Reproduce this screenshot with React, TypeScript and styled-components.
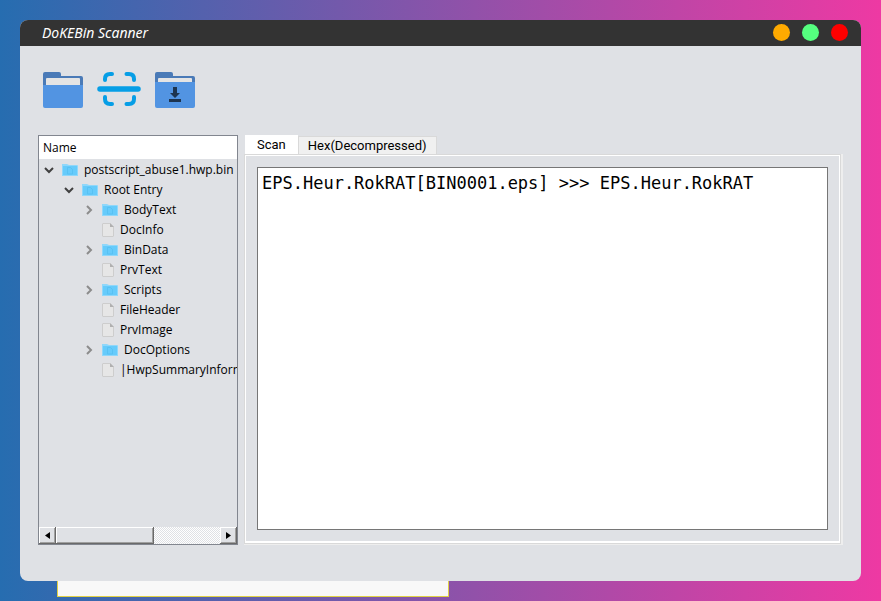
import React, { useState } from "react";
import styled, { createGlobalStyle } from "styled-components";

const GlobalStyle = createGlobalStyle`
  *, *::before, *::after { box-sizing: border-box; }
  body { margin: 0; }
  button { font: inherit; color: inherit; padding: 0; border: 0; background: none; cursor: pointer; }
`;

const Desktop = styled.div`
  min-height: 100vh;
  display: flex;
  flex-direction: column;
  padding: 20px 20px 4px;
  background: linear-gradient(to right, #266db0 0%, #ee39a3 100%);
  font-family: "Open Sans", "Noto Sans", sans-serif;
  color: #000;
`;

const Window = styled.main`
  flex: 1;
  display: flex;
  flex-direction: column;
  border-radius: 8px;
  overflow: hidden;
  background: #dfe1e5;
`;

const TitleBar = styled.header`
  height: 26px;
  display: flex;
  align-items: center;
  justify-content: space-between;
  padding: 0 13px 1px 22px;
  background: #333;
`;

const Title = styled.h1`
  margin: 0;
  color: #fff;
  font-family: "Noto Sans", sans-serif;
  font-size: 14px;
  line-height: 20px;
  font-weight: 400;
  font-style: italic;
`;

const WindowControls = styled.div`
  display: flex;
  gap: 12px;
`;

const ControlDot = styled.button<{ $color: string }>`
  width: 17px;
  height: 17px;
  border-radius: 50%;
  background: ${(p) => p.$color};
`;

const Toolbar = styled.div`
  display: flex;
  gap: 12px;
  padding: 22px 21px 0;
  height: 89px;
`;

const ToolButton = styled.button`
  width: 44px;
  height: 44px;
  display: flex;
  justify-content: center;
  align-items: center;
`;

const Panels = styled.div`
  flex: 1;
  display: grid;
  grid-template-columns: 200px minmax(0, 1fr);
  gap: 6px;
  padding: 0 18px 36px;
`;

const TreePanel = styled.section`
  display: flex;
  flex-direction: column;
  min-width: 0;
  border: 1px solid #82868f;
  overflow: hidden;
`;

const TreeHeader = styled.div`
  height: 23px;
  padding-left: 4px;
  background: #fff;
  font-size: 12px;
  line-height: 23px;
`;

const TreeList = styled.ul`
  flex: 1;
  margin: 0;
  padding: 1px 0 0;
  list-style: none;
`;

const TreeRow = styled.li<{ $depth: number }>`
  display: flex;
  align-items: center;
  height: 20px;
  padding-left: ${(p) => 3 + p.$depth * 20}px;
  font-size: 12px;
  line-height: 20px;
  white-space: nowrap;
`;

const Expander = styled.button`
  flex: none;
  display: flex;
  justify-content: center;
  width: 14px;
  margin-right: 6px;
`;

const ExpanderGap = styled.span`
  flex: none;
  width: 20px;
`;

const FolderSlot = styled.span`
  flex: none;
  display: flex;
  width: 22px;
`;

const FileSlot = styled.span`
  flex: none;
  display: flex;
  width: 18px;
`;

const ScrollBar = styled.div`
  display: flex;
  height: 17px;
  background: repeating-conic-gradient(#fff 0 25%, #dfe1e5 0 50%) 0 0 / 2px 2px;
`;

const ScrollPart = styled.button<{ $width: number }>`
  width: ${(p) => p.$width}px;
  display: flex;
  align-items: center;
  justify-content: center;
  background: #dfe1e5;
  border-right: 1px solid #696969;
  border-bottom: 1px solid #696969;
  box-shadow: inset 1px 1px #fff, inset -1px -1px #a0a0a0;
`;

const TrackSpace = styled.span`
  flex: 1;
`;

const ResultPanel = styled.section`
  display: flex;
  flex-direction: column;
  min-width: 0;
`;

const TabList = styled.div`
  display: flex;
  align-items: flex-end;
  height: 19px;
  padding-left: 1px;
`;

const Tab = styled.button<{ $active: boolean }>`
  height: ${(p) => (p.$active ? 21 : 18)}px;
  margin-bottom: ${(p) => (p.$active ? -2 : 0)}px;
  padding: 0 ${(p) => (p.$active ? 11 : 9)}px ${(p) => (p.$active ? 2 : 0)}px;
  background: ${(p) => (p.$active ? "#fff" : "#f0f0f0")};
  border: 1px solid ${(p) => (p.$active ? "#fff" : "#d9d9d9")};
  border-bottom: 0;
  font-family: Roboto, sans-serif;
  font-size: 13px;
  line-height: 16px;
`;

const Pane = styled.div`
  flex: 1;
  display: flex;
  border-right: 2px solid #eee;
  border-bottom: 1px solid #eee;
`;

const PaneEdge = styled.div`
  flex: 1;
  display: flex;
  border: 1px solid #d9d9d9;
`;

const PaneBody = styled.div`
  flex: 1;
  display: flex;
  padding: 11px;
  border: 1px solid #fff;
  border-bottom-width: 2px;
`;

const Output = styled.textarea`
  flex: 1;
  min-width: 0;
  padding: 5px 4px;
  border: 1px solid #767676;
  border-radius: 0;
  outline: 0;
  resize: none;
  background: #fff;
  color: #000;
  font-family: "DejaVu Sans Mono", monospace;
  font-size: 17px;
  line-height: 21px;
`;

const NoteStrip = styled.div`
  width: 392px;
  max-width: 90%;
  height: 16px;
  margin-left: 37px;
  background: #f8f8f8;
  border: solid #e0d045;
  border-width: 0 1px 1px;
`;

function ToolFolder({ download }: { download?: boolean }) {
  return (
    <svg width="40" height="36" viewBox="0 0 40 36" aria-hidden="true">
      <path d="M0 2Q0 0 2 0H16Q18 0 18 2V4H38Q40 4 40 6V20H0Z" fill="#4a7ab7" />
      <path d="M3 7Q3 6 4 6H36Q37 6 37 7V16H3Z" fill="#e4e4e4" />
      <path
        d={download ? "M0 10H40V34Q40 36 38 36H2Q0 36 0 34Z" : "M0 13H40V34Q40 36 38 36H2Q0 36 0 34Z"}
        fill="#5294e2"
      />
      {download && <path d="M18 15H22V21H25L20 26L15 21H18ZM14 27H26V30H14Z" fill="#1d344f" />}
    </svg>
  );
}

function ScanIcon() {
  return (
    <svg width="44" height="36" viewBox="0 0 44 36" fill="none" stroke="#069ee6" aria-hidden="true">
      <path
        d="M8 8V7Q8 2 13 2H15M29.500 2H32Q37 2 37 7V8M8 25V27Q8 32 13 32H15M29.500 32H32Q37 32 37 27V25"
        strokeWidth="4"
        strokeLinecap="round"
      />
      <path d="M3 17H41" strokeWidth="5.500" strokeLinecap="round" />
    </svg>
  );
}

function SmallFolder() {
  return (
    <svg width="16" height="12" viewBox="0 0 16 12" aria-hidden="true">
      <path d="M0 0H5L7 1H15Q16 1 16 2V12H0Z" fill="#8fd7fa" />
      <path d="M1 2H15V11H1Z" fill="#66cbfb" />
      <path d="M5.500 3.500H8.500L10.500 5.500V10H5.500Z" fill="none" stroke="#58c1f3" />
    </svg>
  );
}

function SmallFile() {
  return (
    <svg width="12" height="14" viewBox="0 0 12 14" aria-hidden="true">
      <path d="M1 .5H8L11.500 4V13Q11.500 13.500 11 13.500H1Q.5 13.500 .5 13V1Q.5 .5 1 .5Z" fill="#e6e6e6" stroke="#cdcdcd" />
      <path d="M8 0L12 4H8Z" fill="#b0b0b0" />
    </svg>
  );
}

function Chevron({ open }: { open: boolean }) {
  return (
    <svg width="10" height="10" viewBox="0 0 10 10" fill="none" strokeWidth="2" aria-hidden="true">
      <path d={open ? "M1 3L5 7L9 3" : "M3 1L7 5L3 9"} stroke={open ? "#404040" : "#8c8c8c"} />
    </svg>
  );
}

type Entry = { name: string; depth: number; kind: "open" | "closed" | "file" };

const entries: Entry[] = [
  { name: "postscript_abuse1.hwp.bin", depth: 0, kind: "open" },
  { name: "Root Entry", depth: 1, kind: "open" },
  { name: "BodyText", depth: 2, kind: "closed" },
  { name: "DocInfo", depth: 2, kind: "file" },
  { name: "BinData", depth: 2, kind: "closed" },
  { name: "PrvText", depth: 2, kind: "file" },
  { name: "Scripts", depth: 2, kind: "closed" },
  { name: "FileHeader", depth: 2, kind: "file" },
  { name: "PrvImage", depth: 2, kind: "file" },
  { name: "DocOptions", depth: 2, kind: "closed" },
  { name: "|HwpSummaryInformation", depth: 2, kind: "file" },
];

const tabs = ["Scan", "Hex(Decompressed)"];

export default function App() {
  const [active, setActive] = useState(tabs[0]);
  return (
    <>
      <GlobalStyle />
      <Desktop>
        <Window>
          <TitleBar>
            <Title>DoKEBin Scanner</Title>
            <WindowControls>
              <ControlDot $color="#ffaa00" aria-label="Minimize" />
              <ControlDot $color="#55ff7f" aria-label="Maximize" />
              <ControlDot $color="#ff0000" aria-label="Close" />
            </WindowControls>
          </TitleBar>
          <Toolbar role="toolbar">
            <ToolButton aria-label="Open"><ToolFolder /></ToolButton>
            <ToolButton aria-label="Scan file"><ScanIcon /></ToolButton>
            <ToolButton aria-label="Save"><ToolFolder download /></ToolButton>
          </Toolbar>
          <Panels>
            <TreePanel>
              <TreeHeader>Name</TreeHeader>
              <TreeList role="tree">
                {entries.map((e) => (
                  <TreeRow key={e.name} role="treeitem" $depth={e.depth}>
                    {e.kind === "file" ? (
                      <>
                        <ExpanderGap />
                        <FileSlot><SmallFile /></FileSlot>
                      </>
                    ) : (
                      <>
                        <Expander aria-label={`Toggle ${e.name}`}><Chevron open={e.kind === "open"} /></Expander>
                        <FolderSlot><SmallFolder /></FolderSlot>
                      </>
                    )}
                    {e.name}
                  </TreeRow>
                ))}
              </TreeList>
              <ScrollBar>
                <ScrollPart $width={17} aria-label="Scroll left">
                  <svg width="5" height="7" viewBox="0 0 5 7"><path d="M5 0V7L0 3.500Z" /></svg>
                </ScrollPart>
                <ScrollPart $width={98} aria-label="Scroll thumb" />
                <TrackSpace />
                <ScrollPart $width={17} aria-label="Scroll right">
                  <svg width="5" height="7" viewBox="0 0 5 7"><path d="M0 0V7L5 3.500Z" /></svg>
                </ScrollPart>
              </ScrollBar>
            </TreePanel>
            <ResultPanel>
              <TabList role="tablist">
                {tabs.map((t) => (
                  <Tab key={t} role="tab" aria-selected={t === active} $active={t === active} onClick={() => setActive(t)}>
                    {t}
                  </Tab>
                ))}
              </TabList>
              <Pane>
                <PaneEdge>
                  <PaneBody>
                    <Output
                      aria-label="Scan result"
                      readOnly
                      spellCheck={false}
                      value="EPS.Heur.RokRAT[BIN0001.eps] >>> EPS.Heur.RokRAT"
                    />
                  </PaneBody>
                </PaneEdge>
              </Pane>
            </ResultPanel>
          </Panels>
        </Window>
        <NoteStrip />
      </Desktop>
    </>
  );
}
